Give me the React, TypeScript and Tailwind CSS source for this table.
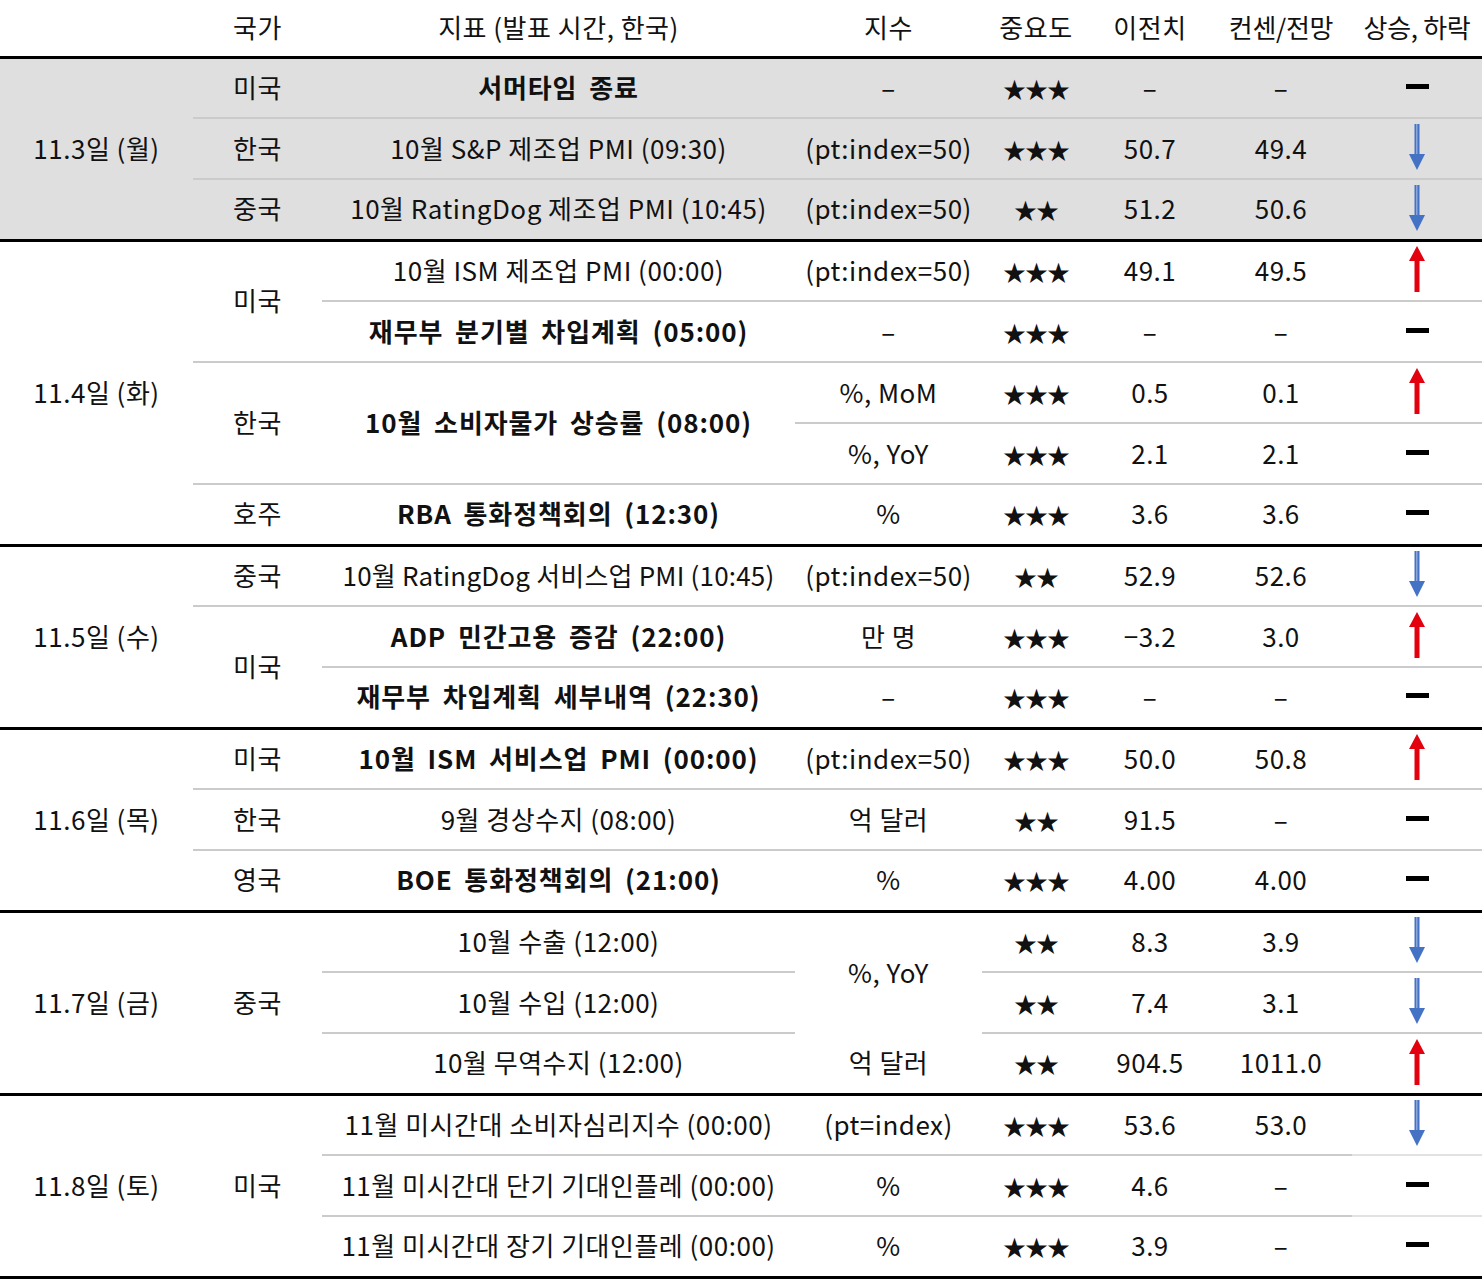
import React from 'react';

// ─── Types ───────────────────────────────────────────────────────────────────
type Line = 'thick' | 'thin' | 'none';
type Trend = 'up' | 'down' | 'flat';

interface CellProps {
  children?: React.ReactNode;
  rowSpan?: number;
  line?: Line;
  bold?: boolean;
  gray?: boolean;
  className?: string;
}

const LINE: Record<Line, string> = {
  thick: 'border-t-[3px] border-t-black',
  thin: 'border-t-2 border-t-[#cbcbcb]',
  none: 'border-t-0',
};

// ─── Table cell ──────────────────────────────────────────────────────────────
const Cell: React.FC<CellProps> = ({ children, rowSpan, line = 'none', bold, gray, className = '' }) => (
  <td
    rowSpan={rowSpan}
    className={`p-0 pb-[3px] text-center align-middle whitespace-nowrap ${LINE[line]} ${gray ? 'bg-[#dfdfdf]' : ''} ${
      bold ? 'font-bold tracking-[0.9px] [word-spacing:5px]' : 'font-normal'
    } ${className}`}
  >
    {children}
  </td>
);

// ─── Trend marks ─────────────────────────────────────────────────────────────
const TrendMark: React.FC<{ trend: Trend }> = ({ trend }) => {
  if (trend === 'flat') {
    return <div className="mx-auto h-[5px] w-[23px] bg-black" />;
  }
  if (trend === 'down') {
    return (
      <svg className="mx-auto block" width="20" height="48" viewBox="0 0 20 48">
        <rect x="7.5" y="1" width="5" height="34" fill="#4472c4" />
        <rect x="9" y="1" width="1.5" height="32" fill="#8aa6dc" />
        <polygon points="2,31 18,31 10,47" fill="#4472c4" />
      </svg>
    );
  }
  return (
    <svg className="mx-auto block" width="20" height="48" viewBox="0 0 20 48">
      <polygon points="10,1 18,16 2,16" fill="#e3000f" />
      <rect x="7.5" y="13" width="5" height="34" fill="#e3000f" />
    </svg>
  );
};

const Stars: React.FC<{ n: number }> = ({ n }) => (
  <span className="text-[23px] tracking-[-1px]">{'★'.repeat(n)}</span>
);

const Dash = () => <span>–</span>;

// ─── Component ───────────────────────────────────────────────────────────────
const App: React.FC = () => {
  const row = 'h-[61px]';

  return (
    <div className="w-[1482px] h-[1282px] bg-white text-[#111] font-['Noto_Sans_CJK_KR',sans-serif] text-[26px] tracking-[0.5px]">
      <table className="w-[1482px] table-fixed border-collapse">
        <colgroup>
          <col className="w-[193px]" />
          <col className="w-[129px]" />
          <col className="w-[473px]" />
          <col className="w-[187px]" />
          <col className="w-[108px]" />
          <col className="w-[120px]" />
          <col className="w-[142px]" />
          <col className="w-[130px]" />
        </colgroup>
        <thead>
          <tr className="h-[57px]">
            <Cell />
            <Cell>국가</Cell>
            <Cell>지표 (발표 시간, 한국)</Cell>
            <Cell>지수</Cell>
            <Cell>중요도</Cell>
            <Cell>이전치</Cell>
            <Cell className="tracking-[-0.3px]">컨센/전망</Cell>
            <Cell className="tracking-[-0.3px]">상승, 하락</Cell>
          </tr>
        </thead>
        <tbody>
          {/* 11.3 (월) */}
          <tr className={row}>
            <Cell line="thick" gray rowSpan={3}>11.3일 (월)</Cell>
            <Cell line="thick" gray>미국</Cell>
            <Cell line="thick" gray bold>서머타임 종료</Cell>
            <Cell line="thick" gray><Dash /></Cell>
            <Cell line="thick" gray><Stars n={3} /></Cell>
            <Cell line="thick" gray><Dash /></Cell>
            <Cell line="thick" gray><Dash /></Cell>
            <Cell line="thick" gray><TrendMark trend="flat" /></Cell>
          </tr>
          <tr className={row}>
            <Cell line="thin" gray>한국</Cell>
            <Cell line="thin" gray>10월 S&amp;P 제조업 PMI (09:30)</Cell>
            <Cell line="thin" gray>(pt:index=50)</Cell>
            <Cell line="thin" gray><Stars n={3} /></Cell>
            <Cell line="thin" gray>50.7</Cell>
            <Cell line="thin" gray>49.4</Cell>
            <Cell line="thin" gray><TrendMark trend="down" /></Cell>
          </tr>
          <tr className={row}>
            <Cell line="thin" gray>중국</Cell>
            <Cell line="thin" gray>10월 RatingDog 제조업 PMI (10:45)</Cell>
            <Cell line="thin" gray>(pt:index=50)</Cell>
            <Cell line="thin" gray><Stars n={2} /></Cell>
            <Cell line="thin" gray>51.2</Cell>
            <Cell line="thin" gray>50.6</Cell>
            <Cell line="thin" gray><TrendMark trend="down" /></Cell>
          </tr>

          {/* 11.4 (화) */}
          <tr className={row}>
            <Cell line="thick" rowSpan={5}>11.4일 (화)</Cell>
            <Cell line="thick" rowSpan={2}>미국</Cell>
            <Cell line="thick">10월 ISM 제조업 PMI (00:00)</Cell>
            <Cell line="thick">(pt:index=50)</Cell>
            <Cell line="thick"><Stars n={3} /></Cell>
            <Cell line="thick">49.1</Cell>
            <Cell line="thick">49.5</Cell>
            <Cell line="thick"><TrendMark trend="up" /></Cell>
          </tr>
          <tr className={row}>
            <Cell line="thin" bold>재무부 분기별 차입계획 (05:00)</Cell>
            <Cell line="thin"><Dash /></Cell>
            <Cell line="thin"><Stars n={3} /></Cell>
            <Cell line="thin"><Dash /></Cell>
            <Cell line="thin"><Dash /></Cell>
            <Cell line="thin"><TrendMark trend="flat" /></Cell>
          </tr>
          <tr className={row}>
            <Cell line="thin" rowSpan={2}>한국</Cell>
            <Cell line="thin" rowSpan={2} bold>10월 소비자물가 상승률 (08:00)</Cell>
            <Cell line="thin">%, MoM</Cell>
            <Cell line="thin"><Stars n={3} /></Cell>
            <Cell line="thin">0.5</Cell>
            <Cell line="thin">0.1</Cell>
            <Cell line="thin"><TrendMark trend="up" /></Cell>
          </tr>
          <tr className={row}>
            <Cell line="thin">%, YoY</Cell>
            <Cell line="thin"><Stars n={3} /></Cell>
            <Cell line="thin">2.1</Cell>
            <Cell line="thin">2.1</Cell>
            <Cell line="thin"><TrendMark trend="flat" /></Cell>
          </tr>
          <tr className={row}>
            <Cell line="thin">호주</Cell>
            <Cell line="thin" bold>RBA 통화정책회의 (12:30)</Cell>
            <Cell line="thin">%</Cell>
            <Cell line="thin"><Stars n={3} /></Cell>
            <Cell line="thin">3.6</Cell>
            <Cell line="thin">3.6</Cell>
            <Cell line="thin"><TrendMark trend="flat" /></Cell>
          </tr>

          {/* 11.5 (수) */}
          <tr className={row}>
            <Cell line="thick" rowSpan={3}>11.5일 (수)</Cell>
            <Cell line="thick">중국</Cell>
            <Cell line="thick" className="tracking-[0.2px]">10월 RatingDog 서비스업 PMI (10:45)</Cell>
            <Cell line="thick">(pt:index=50)</Cell>
            <Cell line="thick"><Stars n={2} /></Cell>
            <Cell line="thick">52.9</Cell>
            <Cell line="thick">52.6</Cell>
            <Cell line="thick"><TrendMark trend="down" /></Cell>
          </tr>
          <tr className={row}>
            <Cell line="thin" rowSpan={2}>미국</Cell>
            <Cell line="thin" bold>ADP 민간고용 증감 (22:00)</Cell>
            <Cell line="thin">만 명</Cell>
            <Cell line="thin"><Stars n={3} /></Cell>
            <Cell line="thin">−3.2</Cell>
            <Cell line="thin">3.0</Cell>
            <Cell line="thin"><TrendMark trend="up" /></Cell>
          </tr>
          <tr className={row}>
            <Cell line="thin" bold>재무부 차입계획 세부내역 (22:30)</Cell>
            <Cell line="thin"><Dash /></Cell>
            <Cell line="thin"><Stars n={3} /></Cell>
            <Cell line="thin"><Dash /></Cell>
            <Cell line="thin"><Dash /></Cell>
            <Cell line="thin"><TrendMark trend="flat" /></Cell>
          </tr>

          {/* 11.6 (목) */}
          <tr className={row}>
            <Cell line="thick" rowSpan={3}>11.6일 (목)</Cell>
            <Cell line="thick">미국</Cell>
            <Cell line="thick" bold>10월 ISM 서비스업 PMI (00:00)</Cell>
            <Cell line="thick">(pt:index=50)</Cell>
            <Cell line="thick"><Stars n={3} /></Cell>
            <Cell line="thick">50.0</Cell>
            <Cell line="thick">50.8</Cell>
            <Cell line="thick"><TrendMark trend="up" /></Cell>
          </tr>
          <tr className={row}>
            <Cell line="thin">한국</Cell>
            <Cell line="thin">9월 경상수지 (08:00)</Cell>
            <Cell line="thin">억 달러</Cell>
            <Cell line="thin"><Stars n={2} /></Cell>
            <Cell line="thin">91.5</Cell>
            <Cell line="thin"><Dash /></Cell>
            <Cell line="thin"><TrendMark trend="flat" /></Cell>
          </tr>
          <tr className={row}>
            <Cell line="thin">영국</Cell>
            <Cell line="thin" bold>BOE 통화정책회의 (21:00)</Cell>
            <Cell line="thin">%</Cell>
            <Cell line="thin"><Stars n={3} /></Cell>
            <Cell line="thin">4.00</Cell>
            <Cell line="thin">4.00</Cell>
            <Cell line="thin"><TrendMark trend="flat" /></Cell>
          </tr>

          {/* 11.7 (금) */}
          <tr className={row}>
            <Cell line="thick" rowSpan={3}>11.7일 (금)</Cell>
            <Cell line="thick" rowSpan={3}>중국</Cell>
            <Cell line="thick">10월 수출 (12:00)</Cell>
            <Cell line="thick" rowSpan={2}>%, YoY</Cell>
            <Cell line="thick"><Stars n={2} /></Cell>
            <Cell line="thick">8.3</Cell>
            <Cell line="thick">3.9</Cell>
            <Cell line="thick"><TrendMark trend="down" /></Cell>
          </tr>
          <tr className={row}>
            <Cell line="thin">10월 수입 (12:00)</Cell>
            <Cell line="thin"><Stars n={2} /></Cell>
            <Cell line="thin">7.4</Cell>
            <Cell line="thin">3.1</Cell>
            <Cell line="thin"><TrendMark trend="down" /></Cell>
          </tr>
          <tr className={row}>
            <Cell line="thin">10월 무역수지 (12:00)</Cell>
            <Cell line="none">억 달러</Cell>
            <Cell line="thin"><Stars n={2} /></Cell>
            <Cell line="thin">904.5</Cell>
            <Cell line="thin">1011.0</Cell>
            <Cell line="thin"><TrendMark trend="up" /></Cell>
          </tr>

          {/* 11.8 (토) */}
          <tr className={row}>
            <Cell line="thick" rowSpan={3}>11.8일 (토)</Cell>
            <Cell line="thick" rowSpan={3}>미국</Cell>
            <Cell line="thick">11월 미시간대 소비자심리지수 (00:00)</Cell>
            <Cell line="thick">(pt=index)</Cell>
            <Cell line="thick"><Stars n={3} /></Cell>
            <Cell line="thick">53.6</Cell>
            <Cell line="thick">53.0</Cell>
            <Cell line="thick"><TrendMark trend="down" /></Cell>
          </tr>
          <tr className={row}>
            <Cell line="thin">11월 미시간대 단기 기대인플레 (00:00)</Cell>
            <Cell line="thin">%</Cell>
            <Cell line="thin"><Stars n={3} /></Cell>
            <Cell line="thin">4.6</Cell>
            <Cell line="thin"><Dash /></Cell>
            <Cell line="thin" className="border-t-[#e2e2e2]"><TrendMark trend="flat" /></Cell>
          </tr>
          <tr className={`${row} border-b-[3px] border-b-black`}>
            <Cell line="thin">11월 미시간대 장기 기대인플레 (00:00)</Cell>
            <Cell line="thin">%</Cell>
            <Cell line="thin"><Stars n={3} /></Cell>
            <Cell line="thin">3.9</Cell>
            <Cell line="thin"><Dash /></Cell>
            <Cell line="thin" className="border-t-[#e2e2e2]"><TrendMark trend="flat" /></Cell>
          </tr>
        </tbody>
      </table>
    </div>
  );
};

export default App;
